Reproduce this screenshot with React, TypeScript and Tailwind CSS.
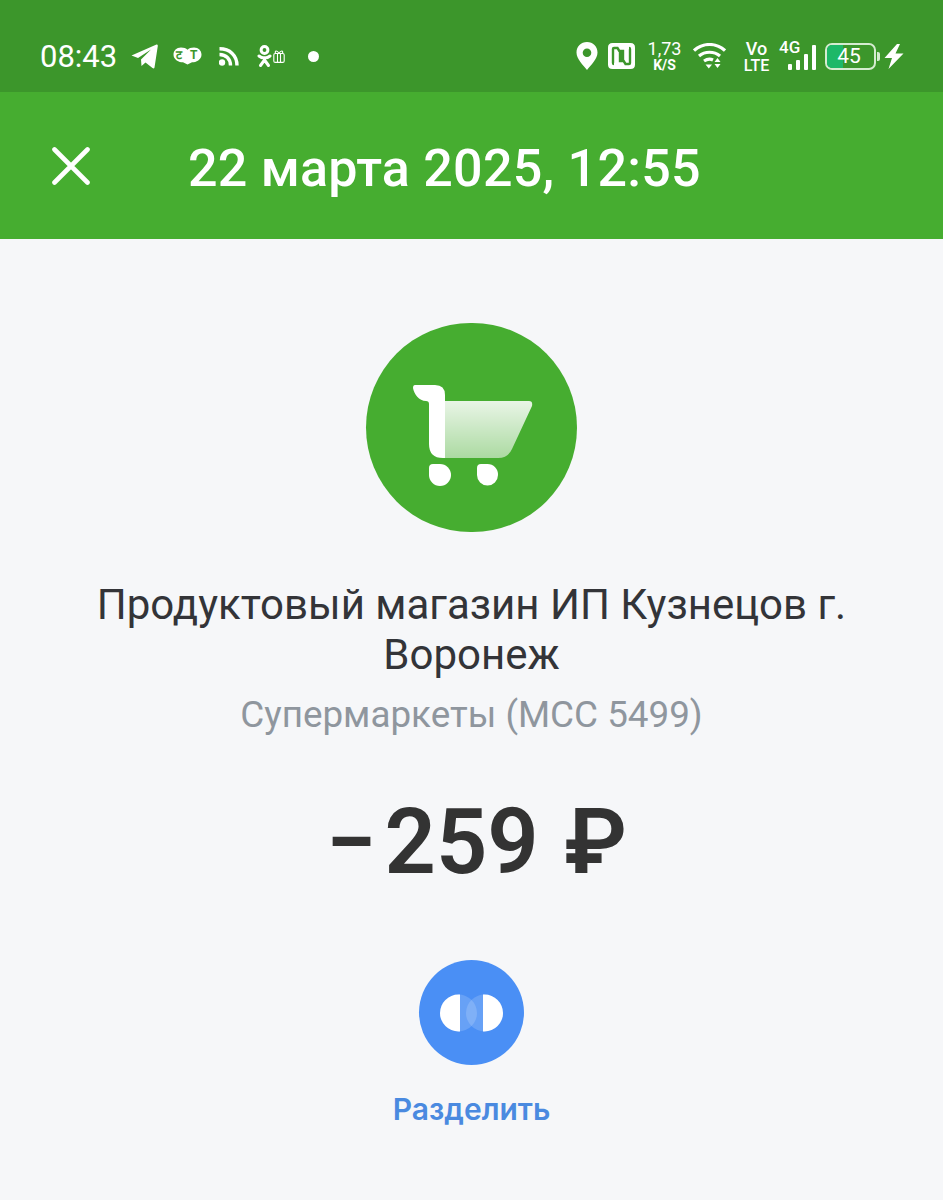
const font = "font-['Roboto',sans-serif]";

function Telegram() {
  return (
    <svg width="27" height="25" viewBox="0 0 27 25" className="shrink-0">
      <path d="M0.5 11.5 L25.5 0.5 Q27 0 26.8 2 L23.5 23.5 Q23 25 21.5 24 L14.5 18.5 L10.5 22 L10 15.5 L20 5.5 L7 14 Z" fill="#fff" />
    </svg>
  );
}

function Translate() {
  return (
    <div className="relative w-[29px] h-[18px] shrink-0">
      <svg width="29" height="18" viewBox="0 0 29 20" preserveAspectRatio="none" className="absolute inset-0">
        <path d="M8 0.5 C11 0.5 13 1.5 14.5 3 C16 1.5 18 0.5 21 0.5 C25.5 0.5 28.5 4 28.5 8.5 C28.5 14 23 17 19 17 L14.5 19.5 L10 17 C6 17 0.5 14 0.5 8.5 C0.5 4 3.5 0.5 8 0.5Z" fill="#fff" />
      </svg>
      <span className={`absolute left-[3px] top-[1px] text-[12px] leading-[14px] font-bold text-[#3c962b] ${font}`}>ट</span>
      <span className={`absolute left-[17px] top-[1px] text-[12px] leading-[14px] font-bold text-[#3c962b] ${font}`}>T</span>
    </div>
  );
}

function Rss() {
  return (
    <svg width="20" height="19" viewBox="0 0 20 19" className="shrink-0" fill="none" stroke="#fff" strokeWidth="3.4">
      <circle cx="3" cy="15.5" r="3.2" fill="#fff" stroke="none" />
      <path d="M0.5 7.5 C7 7.5 11.5 12 11.5 18.5" />
      <path d="M0.5 1.8 C11 1.8 18 8.5 18 18.5" />
    </svg>
  );
}

function Ok() {
  return (
    <svg width="15" height="23" viewBox="0 0 15 23" className="shrink-0" fill="none" stroke="#fff" strokeWidth="3" strokeLinecap="round">
      <circle cx="7.5" cy="5" r="3.4" />
      <path d="M2 11 C5 13.5 10 13.5 13 11" />
      <path d="M7.5 13 V15 M7.5 15 L3.5 20.5 M7.5 15 L11.5 20.5" />
    </svg>
  );
}

function Gift() {
  return (
    <svg width="12" height="13" viewBox="0 0 12 13" className="shrink-0" fill="none" stroke="#fff" strokeWidth="1.1">
      <rect x="0.8" y="3.5" width="10.4" height="8.9" rx="1.5" />
      <path d="M4.5 3.5 V12.4 M7.5 3.5 V12.4" />
      <path d="M6 3.3 C4 0 1.5 0.5 2.5 3.3 M6 3.3 C8 0 10.5 0.5 9.5 3.3" />
    </svg>
  );
}

function Pin() {
  return (
    <svg width="22" height="28" viewBox="0 0 22 28" className="shrink-0">
      <path fillRule="evenodd" d="M11 0 C17 0 21.5 4.5 21.5 10.5 C21.5 17 15 23 11 28 C7 23 0.5 17 0.5 10.5 C0.5 4.5 5 0 11 0Z M11 6.5 A4.3 4.3 0 1 0 11 15.1 A4.3 4.3 0 1 0 11 6.5Z" fill="#fff" />
    </svg>
  );
}

function Nfc() {
  return (
    <svg width="27" height="26" viewBox="0 0 27 26" className="shrink-0">
      <path d="M4.5 0 H22.5 Q27 0 27 4.5 V21.5 Q27 26 22.5 26 H4.5 Q0 26 0 21.5 V4.5 Q0 0 4.5 0Z" fill="#fff" />
      <path d="M6 21 Q5 21 5 20 V6 Q5 5 6 5 H9.5 L15 14 V8 H12 M21 5 Q22 5 22 6 V20 Q22 21 21 21 H17.5 L12 12 V18 H15" fill="none" stroke="#3c962b" strokeWidth="2.4" />
    </svg>
  );
}

function Wifi() {
  return (
    <svg width="33" height="26" viewBox="0 0 33 26" className="shrink-0" fill="none" stroke="#fff" strokeWidth="3.2">
      <path d="M1 7.5 C10 -0.5 23 -0.5 32 7.5" />
      <path d="M6 13 C12 8 21 8 27 13" />
      <path d="M11 18 C14 16 18 16 20 17" />
      <path d="M12.5 21.5 H19 L15.8 25.5Z" fill="#fff" stroke="none" />
      <path d="M24.5 15 L27.5 19 H21.5Z M21.5 21 H27.5 L24.5 25Z" fill="#fff" stroke="none" />
    </svg>
  );
}

function Signal() {
  return (
    <div className="flex items-end gap-[4px] h-[28px] ml-[-12px] shrink-0">
      <div className="w-[4px] h-[6px] bg-white rounded-[1px]" />
      <div className="w-[4px] h-[10px] bg-white rounded-[1px]" />
      <div className="w-[4px] h-[16px] bg-white rounded-[1px]" />
      <div className="w-[4px] h-[25px] bg-white rounded-[1px]" />
    </div>
  );
}

function Bolt() {
  return (
    <svg width="20" height="25" viewBox="0 0 20 25" className="shrink-0">
      <path d="M13 0 L0.5 14 H8 L4.5 25 L19.5 9.5 H11.5 L16 0Z" fill="#fff" />
    </svg>
  );
}

function StatusBar() {
  return (
    <div className={`h-[92px] pt-[20px] bg-[#3c962b] flex items-center justify-between pl-[40px] pr-[39px] text-white ${font}`}>
      <div className="flex items-center">
        <span className="text-[31px] leading-none w-[77px]">08:43</span>
        <div className="ml-[14px]"><Telegram /></div>
        <div className="ml-[15px]"><Translate /></div>
        <div className="ml-[17px]"><Rss /></div>
        <div className="ml-[18px]"><Ok /></div>
        <div className="ml-[1px]"><Gift /></div>
        <div className="ml-[23px] w-[11px] h-[11px] rounded-full bg-white" />
      </div>
      <div className="flex items-center">
        <Pin />
        <div className="ml-[10px]"><Nfc /></div>
        <div className="ml-[13px] w-[33px] flex flex-col items-center">
          <span className="text-[18px] leading-[18px]">1,73</span>
          <span className="text-[14px] leading-[14px] font-bold">K/S</span>
        </div>
        <div className="ml-[12px]"><Wifi /></div>
        <div className="ml-[17px] w-[27px] flex flex-col items-center font-medium">
          <span className="text-[18px] leading-[18px]">Vo</span>
          <span className="text-[16px] leading-[15px]">LTE</span>
        </div>
        <span className="ml-[9px] w-[21px] text-[17px] leading-[17px] font-medium self-start mt-[-1px]">4G</span>
        <Signal />
        <div className="ml-[9px] w-[51px] h-[27px] rounded-[7px] border-2 border-[#d5ecd0] relative overflow-hidden shrink-0">
          <div className="absolute left-0 top-0 bottom-0 w-[16px] bg-[#1db868]" />
          <span className="absolute inset-0 pr-[3px] flex items-center justify-center text-[21px] leading-none">45</span>
        </div>
        <div className="ml-[1px] w-[3px] h-[9px] bg-[#d5ecd0] rounded-r-[2px]" />
        <div className="ml-[4px]"><Bolt /></div>
      </div>
    </div>
  );
}

function Header() {
  return (
    <div className={`h-[147px] pt-[7px] bg-[#46ad30] flex items-center pl-[52px] ${font}`}>
      <svg width="38" height="38" viewBox="0 0 38 38" className="shrink-0 mt-[-7px]" fill="none" stroke="#fff" strokeWidth="4.6" strokeLinecap="round">
        <path d="M2.5 2.5 L35.5 35.5 M35.5 2.5 L2.5 35.5" />
      </svg>
      <h1 className="ml-[98px] text-[52px] leading-none font-medium tracking-[0.25px] text-white whitespace-nowrap">22 марта 2025, 12:55</h1>
    </div>
  );
}

function Cart() {
  return (
    <svg width="120" height="101" viewBox="0 0 120 101" className="mt-[16px] ml-[2px]">
      <defs>
        <linearGradient id="basket" x1="0" y1="0" x2="0" y2="1">
          <stop offset="0" stopColor="#fff" stopOpacity="0.88" />
          <stop offset="1" stopColor="#fff" stopOpacity="0.55" />
        </linearGradient>
      </defs>
      <path d="M32 16 H116 Q120 16 119 21 L99 64 Q95 73 85 73 H32Z" fill="url(#basket)" />
      <path d="M2 0 H22 Q32 0 32 10 V73 H30 Q16 73 16 59 V19 Q16 16 13 16 C6 16 1 9 0 3 Q0 0 2 0Z" fill="#fff" />
      <path d="M16 83 Q16 79 20 79 H27 A11 11 0 0 1 38 90 A11 11 0 0 1 16 90Z" fill="#fff" />
      <path d="M64 83 Q64 79 68 79 H74.5 A10.5 10.5 0 0 1 85 90 A10.5 10.5 0 0 1 64 90Z" fill="#fff" />
    </svg>
  );
}

function Split() {
  return (
    <svg width="63" height="38" viewBox="0 0 63 38">
      <defs>
        <clipPath id="leftHalf"><rect x="0" y="0" width="20" height="38" /></clipPath>
        <clipPath id="rightHalf"><rect x="43" y="0" width="20" height="38" /></clipPath>
      </defs>
      <circle cx="18.5" cy="19" r="18.5" fill="#fff" clipPath="url(#leftHalf)" />
      <circle cx="44.5" cy="19" r="18.5" fill="#fff" clipPath="url(#rightHalf)" />
      <circle cx="18.5" cy="19" r="18.5" fill="#fff" opacity="0.16" />
      <circle cx="44.5" cy="19" r="18.5" fill="#fff" opacity="0.16" />
    </svg>
  );
}

export default function App() {
  return (
    <div className={`w-[943px] h-[1200px] overflow-hidden bg-[#f6f7f9] ${font}`}>
      <StatusBar />
      <Header />
      <main className="flex flex-col items-center">
        <div className="mt-[84px] w-[211px] h-[209px] rounded-full bg-[#46ad30] flex items-center justify-center">
          <Cart />
        </div>
        <p className="mt-[48px] w-[800px] text-center text-[42px] leading-[50px] text-[#333438]">
          Продуктовый магазин ИП Кузнецов г. Воронеж
        </p>
        <p className="mt-[13px] text-[36.8px] leading-[44px] text-[#8f969e]">Супермаркеты (MCC 5499)</p>
        <p className="mt-[56px] pl-[10px] text-[90px] leading-[100px] font-semibold [word-spacing:3px] text-[#333333] whitespace-nowrap">
          <span className="mr-[8px]">−</span>259 ₽
        </p>
        <div className="mt-[67px] w-[105px] h-[105px] rounded-full bg-[#4a8ff5] flex items-center justify-center">
          <Split />
        </div>
        <p className="mt-[26px] font-['Inter',sans-serif] text-[30px] leading-[36px] font-semibold text-[#4a8ae0]">Разделить</p>
      </main>
    </div>
  );
}
